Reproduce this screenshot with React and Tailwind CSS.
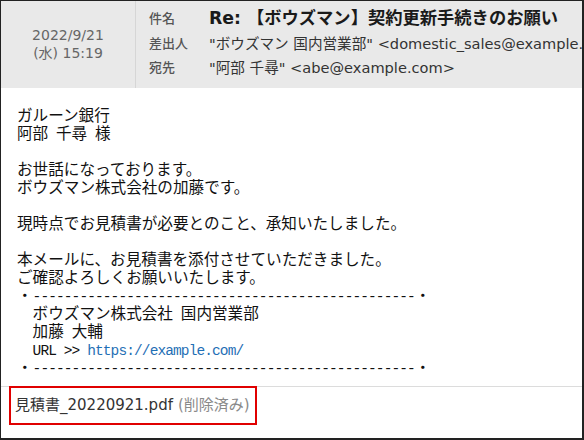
const sans = { fontFamily: '"DejaVu Sans", "Noto Sans CJK JP", sans-serif' };

// ascii runs stay narrow mono, full-width runs get twice the cell
const Line = ({ text, link }) => (
  <div className="h-[18px] whitespace-pre">
    {text.split(/([\x00-\x7f]+)/).map((s, i) =>
      /^[\x00-\x7f]+$/.test(s) ? (
        <span key={i} className="tracking-[-0.9px]">{s}</span>
      ) : (
        <span key={i} className="text-[15.6px]">{s}</span>
      )
    )}
    {link && <span className="tracking-[-0.9px] text-[#1f6fb5]">{link}</span>}
  </div>
);

const dash = '・' + '-'.repeat(49) + '・';

const lines = [
  'ガルーン銀行',
  '阿部 千尋 様',
  '',
  'お世話になっております。',
  'ボウズマン株式会社の加藤です。',
  '',
  '現時点でお見積書が必要とのこと、承知いたしました。',
  '',
  '本メールに、お見積書を添付させていただきました。',
  'ご確認よろしくお願いいたします。',
  dash,
  '  ボウズマン株式会社 国内営業部',
  '  加藤 大輔',
];

const App = () => {
  return (
    <div className="w-[584px] h-[440px] flex flex-col bg-white border-l border-t border-r-2 border-b-2 border-[#222] overflow-hidden">
      <div className="flex h-[87px] shrink-0 bg-[#e9e9e9]" style={sans}>
        <div className="w-[135px] shrink-0 border-r border-[#d6d6d6] flex flex-col items-center justify-center pb-[2px] text-[14px] leading-[18px] text-[#666]">
          <div>2022/9/21</div>
          <div>(水) 15:19</div>
        </div>
        <div className="flex-1 pl-[13px] pt-[5px] min-w-0 whitespace-nowrap overflow-hidden">
          <div className="flex items-center h-[26px]">
            <span className="w-[60px] shrink-0 text-[13px] text-[#555] font-medium">件名</span>
            <span className="text-[17.3px] font-bold text-[#1a1a1a]">Re: 【ボウズマン】契約更新手続きのお願い</span>
          </div>
          <div className="flex items-center h-[24px]">
            <span className="w-[60px] shrink-0 text-[13px] text-[#555] font-medium">差出人</span>
            <span className="text-[14.6px] text-[#333]">"ボウズマン 国内営業部" &lt;domestic_sales@example.com&gt;</span>
          </div>
          <div className="flex items-center h-[23px]">
            <span className="w-[60px] shrink-0 text-[13px] text-[#555] font-medium">宛先</span>
            <span className="text-[14.6px] text-[#333]">"阿部 千尋" &lt;abe@example.com&gt;</span>
          </div>
        </div>
      </div>

      <div
        className="flex-1 pl-[16px] pt-[20px] text-[14.5px] leading-[18px] text-[#111]"
        style={{ fontFamily: '"Liberation Mono", "Noto Sans CJK JP", monospace' }}
      >
        {lines.map((t, i) => (
          <Line key={i} text={t} />
        ))}
        <Line text="  URL >> " link="https://example.com/" />
        <Line text={dash} />
      </div>

      <div className="h-[52px] shrink-0 border-t border-[#dcdcdc]" style={sans}>
        <div className="-mt-px ml-[8px] w-[248px] h-[39px] border-2 border-[#e00000] flex items-center pl-[4px] text-[15px] whitespace-nowrap">
          <span className="text-[#333]">見積書_20220921.pdf</span>
          <span className="ml-[5px] text-[#8a8a8a]">(削除済み)</span>
        </div>
      </div>
    </div>
  );
};

export default App;
